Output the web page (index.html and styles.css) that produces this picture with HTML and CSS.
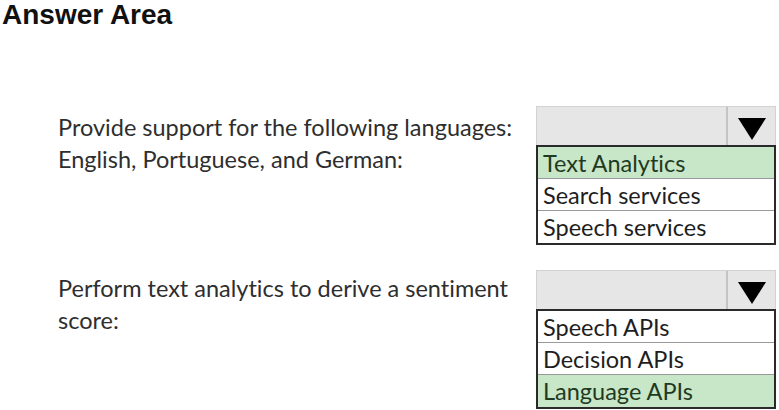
FILE: index.html
```html
<!DOCTYPE html>
<html lang="en">
<head>
<meta charset="utf-8">
<title>Answer Area</title>
<link rel="stylesheet" href="styles.css">
</head>
<body>
<div class="page">
  <h1 class="title">Answer Area</h1>

  <div class="question q1">
    <div class="prompt">Provide support for the following languages:<br>English, Portuguese, and German:</div>
    <div class="dropdown">
      <div class="select">
        <div class="select-value"></div>
        <div class="select-arrow"><span class="tri"></span></div>
      </div>
      <ul class="options">
        <li class="option selected">Text Analytics</li>
        <li class="option">Search services</li>
        <li class="option">Speech services</li>
      </ul>
    </div>
  </div>

  <div class="question q2">
    <div class="prompt">Perform text analytics to derive a sentiment<br>score:</div>
    <div class="dropdown">
      <div class="select">
        <div class="select-value"></div>
        <div class="select-arrow"><span class="tri"></span></div>
      </div>
      <ul class="options">
        <li class="option">Speech APIs</li>
        <li class="option">Decision APIs</li>
        <li class="option selected">Language APIs</li>
      </ul>
    </div>
  </div>
</div>
</body>
</html>
```
FILE: styles.css
```css
html, body {
  margin: 0;
  padding: 0;
  background: #ffffff;
}

.page {
  width: 779px;
  height: 410px;
  overflow: hidden;
  font-family: Lato, "Open Sans", sans-serif;
  font-variant-ligatures: none;
}

.title {
  margin: 0;
  padding-left: 2px;
  font-family: "Liberation Sans", Arial, sans-serif;
  font-weight: bold;
  font-size: 28px;
  line-height: 30px;
  color: #111111;
}

.question {
  display: flex;
  align-items: flex-start;
}

.q1 {
  margin-top: 76px;
}

.q2 {
  margin-top: 25px;
}

.prompt {
  width: 478px;
  padding-left: 58px;
  font-size: 23.5px;
  line-height: 32px;
  color: #2e2e2e;
}

.q1 .prompt {
  padding-top: 5px;
}

.q2 .prompt {
  padding-top: 2px;
}

.dropdown {
  width: 240px;
  display: flex;
  flex-direction: column;
}

.select {
  display: flex;
  height: 39px;
  box-sizing: border-box;
  border: 1px solid #d2d2d2;
  border-bottom: none;
  background: #e6e6e6;
}

.select-value {
  flex: 1;
  border-right: 2px solid #c4c4c4;
}

.select-arrow {
  width: 47px;
  display: flex;
  align-items: center;
  justify-content: center;
  padding-top: 5px;
  box-sizing: border-box;
}

.tri {
  width: 0;
  height: 0;
  border-left: 14px solid transparent;
  border-right: 14px solid transparent;
  border-top: 22px solid #000000;
}

.options {
  list-style: none;
  margin: 0;
  padding: 0;
  border: 2px solid #2a2a2a;
  background: #ffffff;
}

.option {
  height: 32px;
  box-sizing: border-box;
  padding-left: 5px;
  font-size: 23.5px;
  line-height: 32px;
  color: #1e1e1e;
  border-bottom: 1px solid #9a9a9a;
}

.option:last-child {
  border-bottom: none;
}

.option.selected {
  background: #c8e6c8;
  color: #1f3a1f;
}
```
